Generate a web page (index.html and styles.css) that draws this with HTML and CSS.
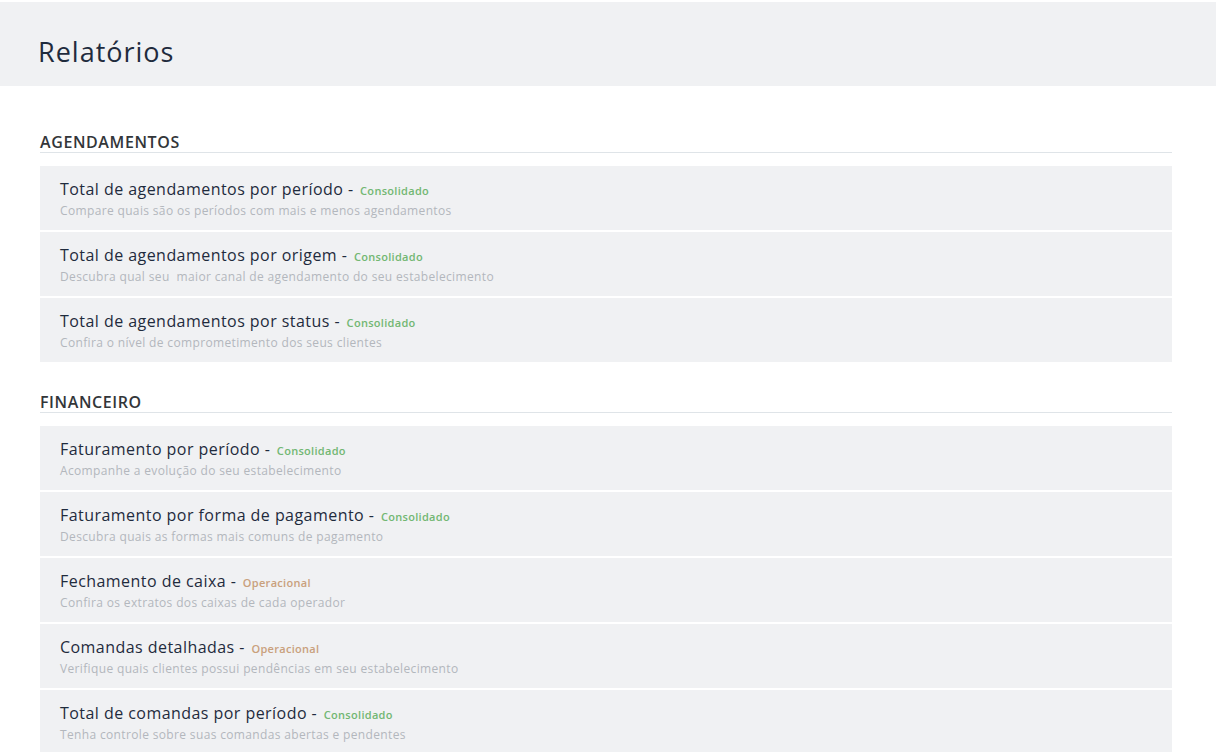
FILE: index.html
```html
<!DOCTYPE html>
<html lang="pt-BR">
<head>
<meta charset="utf-8">
<title>Relatórios</title>
<link rel="stylesheet" href="styles.css">
</head>
<body>
<header class="page-header">
  <h1 class="page-title">Relatórios</h1>
</header>
<main class="content">
  <section class="group">
    <h2 class="group-title">AGENDAMENTOS</h2>
    <ul class="report-list">
      <li class="report">
        <div class="report-title">Total de agendamentos por período - <span class="tag tag-cons">Consolidado</span></div>
        <div class="report-desc">Compare quais são os períodos com mais e menos agendamentos</div>
      </li>
      <li class="report">
        <div class="report-title">Total de agendamentos por origem - <span class="tag tag-cons">Consolidado</span></div>
        <div class="report-desc">Descubra qual seu &nbsp;maior canal de agendamento do seu estabelecimento</div>
      </li>
      <li class="report">
        <div class="report-title">Total de agendamentos por status - <span class="tag tag-cons">Consolidado</span></div>
        <div class="report-desc">Confira o nível de comprometimento dos seus clientes</div>
      </li>
    </ul>
  </section>
  <section class="group">
    <h2 class="group-title">FINANCEIRO</h2>
    <ul class="report-list">
      <li class="report">
        <div class="report-title">Faturamento por período - <span class="tag tag-cons">Consolidado</span></div>
        <div class="report-desc">Acompanhe a evolução do seu estabelecimento</div>
      </li>
      <li class="report">
        <div class="report-title">Faturamento por forma de pagamento - <span class="tag tag-cons">Consolidado</span></div>
        <div class="report-desc">Descubra quais as formas mais comuns de pagamento</div>
      </li>
      <li class="report">
        <div class="report-title">Fechamento de caixa - <span class="tag tag-op">Operacional</span></div>
        <div class="report-desc">Confira os extratos dos caixas de cada operador</div>
      </li>
      <li class="report">
        <div class="report-title">Comandas detalhadas - <span class="tag tag-op">Operacional</span></div>
        <div class="report-desc">Verifique quais clientes possui pendências em seu estabelecimento</div>
      </li>
      <li class="report">
        <div class="report-title">Total de comandas por período - <span class="tag tag-cons">Consolidado</span></div>
        <div class="report-desc">Tenha controle sobre suas comandas abertas e pendentes</div>
      </li>
    </ul>
  </section>
</main>
</body>
</html>
```
FILE: styles.css
```css
* { box-sizing: border-box; }
html, body { margin: 0; padding: 0; }
body {
  background: #ffffff;
  font-family: "Open Sans", "Noto Sans", sans-serif;
  color: #1f2b3d;
  overflow: hidden;
}
.page-header {
  margin-top: 2px;
  height: 84px;
  background: #f0f1f3;
  display: flex;
  align-items: flex-start;
  padding: 34px 0 0 38px;
}
.page-title {
  margin: 0;
  font-weight: 400;
  font-size: 27px;
  letter-spacing: 1px;
  color: #1f2b3d;
  line-height: 32px;
}
.content {
  padding: 46px 44px 0 40px;
}
.group + .group { margin-top: 30px; }
.group-title {
  margin: 0;
  font-size: 16px;
  font-weight: 600;
  line-height: 20px;
  letter-spacing: 0.6px;
  color: #333639;
  border-bottom: 1px solid #dfe4e8;
}
.report-list {
  list-style: none;
  margin: 13px 0 0;
  padding: 0;
  display: flex;
  flex-direction: column;
  gap: 2px;
}
.report {
  height: 64px;
  background: #f0f1f3;
  padding: 13px 20px 0;
}
.report-title {
  font-size: 16px;
  line-height: 20px;
  letter-spacing: 0.45px;
  color: #1f2b3d;
}
.tag {
  font-size: 11px;
  font-weight: 600;
  letter-spacing: 0.3px;
  margin-left: 2px;
}
.tag-cons { color: #72b772; }
.tag-op { color: #c9a07c; }
.report-desc {
  margin-top: 2px;
  font-size: 12px;
  line-height: 16px;
  letter-spacing: 0.35px;
  color: #b3b7bd;
}
```
